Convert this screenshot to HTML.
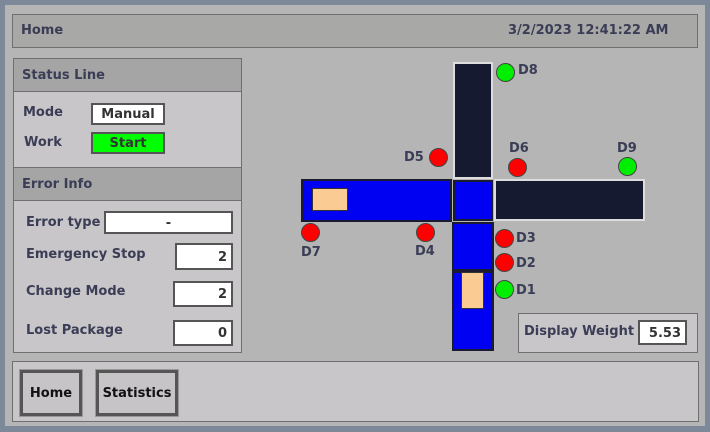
<!DOCTYPE html><html><head><style>
*{margin:0;padding:0;box-sizing:border-box}
body{width:710px;height:432px;background:#7d8899;font-family:"DejaVu Sans","Liberation Sans",sans-serif;font-weight:bold;font-size:13px;color:#3a3d55;position:relative;overflow:hidden}
.a{position:absolute}
.main{left:5px;top:5px;width:700px;height:421px;background:#b5b5b5}
.hdr{left:12px;top:14px;width:686px;height:34px;background:#a8a8a6;border:1px solid #6f6f6f}
.pan{background:#c8c6c8;border:1px solid #6f6f6f}
.ph{background:#a5a5a5;border:1px solid #6f6f6f}
.box{background:#fff;border:2px solid #555;text-align:right;padding-right:4px;color:#333;font-size:13px}
.c{width:19px;height:19px;border-radius:50%;border:1px solid #444}
.r{background:#f00}.g{background:#0e0}
.dk{background:#161a30;border:2px solid #ddd}
.bl{background:#0000f2;border:2px solid #1a1a30}
.pk{background:#fbcb94;border:1px solid #333}
.btn{background:#c6c4c6;border:3px solid #555;outline:1px solid #999;color:#111;text-align:center;line-height:42px}
</style></head><body>
<div class="a main"></div>
<div class="a hdr"></div>
<div class="a" style="left:21px;top:23px">Home</div>
<div class="a" style="left:508px;top:23px">3/2/2023 12:41:22 AM</div>

<div class="a pan" style="left:13px;top:58px;width:229px;height:295px"></div>
<div class="a ph" style="left:13px;top:58px;width:229px;height:34px"></div>
<div class="a" style="left:22px;top:68px">Status Line</div>
<div class="a ph" style="left:13px;top:167px;width:229px;height:34px"></div>
<div class="a" style="left:22px;top:177px">Error Info</div>
<div class="a" style="left:23px;top:105px">Mode</div>
<div class="a" style="left:24px;top:135px">Work</div>
<div class="a box" style="left:91px;top:103px;width:74px;height:22px;text-align:center;padding:0;line-height:20px">Manual</div>
<div class="a box" style="left:91px;top:132px;width:74px;height:22px;text-align:center;padding:0;line-height:20px;background:#0f0;color:#333">Start</div>
<div class="a" style="left:26px;top:215px">Error type</div>
<div class="a box" style="left:104px;top:211px;width:129px;height:23px;text-align:center;padding:0;line-height:21px">-</div>
<div class="a" style="left:26px;top:247px">Emergency Stop</div>
<div class="a box" style="left:175px;top:243px;width:58px;height:27px;line-height:25px">2</div>
<div class="a" style="left:26px;top:284px">Change Mode</div>
<div class="a box" style="left:173px;top:281px;width:60px;height:26px;line-height:24px">2</div>
<div class="a" style="left:26px;top:323px">Lost Package</div>
<div class="a box" style="left:173px;top:320px;width:60px;height:26px;line-height:24px">0</div>

<div class="a pan" style="left:12px;top:361px;width:687px;height:61px"></div>
<div class="a btn" style="left:20px;top:370px;width:62px;height:46px">Home</div>
<div class="a btn" style="left:96px;top:370px;width:82px;height:46px">Statistics</div>

<div class="a pan" style="left:518px;top:313px;width:180px;height:40px"></div>
<div class="a" style="left:524px;top:324px">Display Weight</div>
<div class="a box" style="left:638px;top:320px;width:49px;height:25px;line-height:23px">5.53</div>

<div class="a dk" style="left:453px;top:62px;width:40px;height:117px"></div>
<div class="a bl" style="left:301px;top:179px;width:151px;height:43px"></div>
<div class="a bl" style="left:453px;top:180px;width:40px;height:41px"></div>
<div class="a dk" style="left:494px;top:179px;width:151px;height:42px"></div>
<div class="a bl" style="left:452px;top:222px;width:42px;height:49px"></div>
<div class="a bl" style="left:452px;top:271px;width:42px;height:80px"></div>
<div class="a pk" style="left:312px;top:188px;width:36px;height:23px"></div>
<div class="a pk" style="left:461px;top:272px;width:23px;height:37px"></div>

<div class="a c g" style="left:496px;top:63px"></div><div class="a" style="left:518px;top:63px">D8</div>
<div class="a c r" style="left:429px;top:148px"></div><div class="a" style="left:404px;top:150px">D5</div>
<div class="a c r" style="left:508px;top:158px"></div><div class="a" style="left:509px;top:141px">D6</div>
<div class="a c g" style="left:618px;top:157px"></div><div class="a" style="left:617px;top:141px">D9</div>
<div class="a c r" style="left:301px;top:223px"></div><div class="a" style="left:301px;top:245px">D7</div>
<div class="a c r" style="left:416px;top:223px"></div><div class="a" style="left:415px;top:244px">D4</div>
<div class="a c r" style="left:495px;top:229px"></div><div class="a" style="left:516px;top:231px">D3</div>
<div class="a c r" style="left:495px;top:253px"></div><div class="a" style="left:516px;top:256px">D2</div>
<div class="a c g" style="left:495px;top:280px"></div><div class="a" style="left:516px;top:283px">D1</div>
</body></html>
